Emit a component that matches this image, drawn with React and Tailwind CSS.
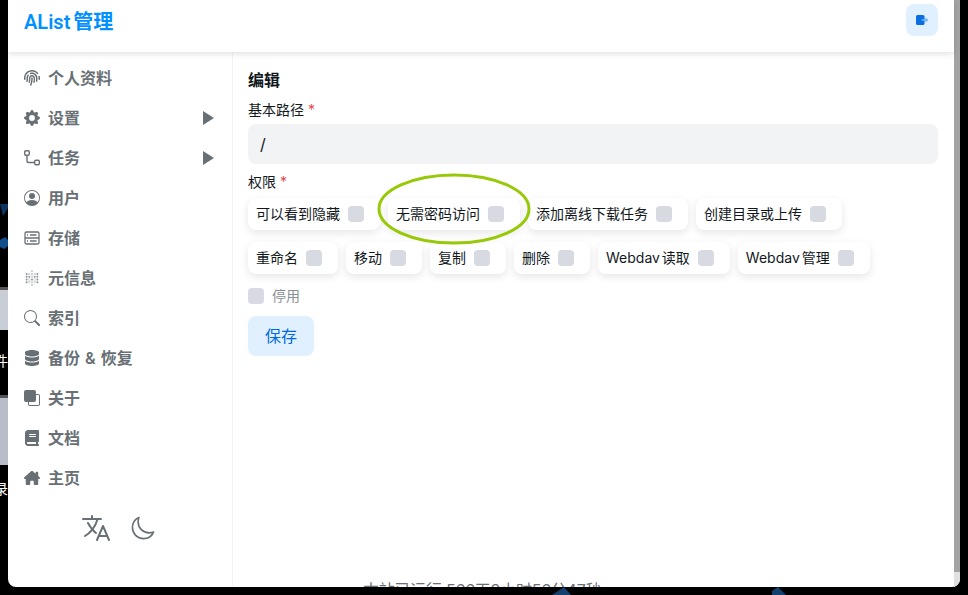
import { IoMoonOutline, IoLanguageOutline } from 'react-icons/io5'
import { BsGearFill, BsPersonCircle, BsFront, BsSearch } from 'react-icons/bs'
import { SiMetabase } from 'react-icons/si'
import { FaBook, FaHouseChimney, FaFingerprint, FaDatabase } from 'react-icons/fa6'

const FONT = '[font-family:Inter,"Noto_Sans_CJK_SC",sans-serif]'

// ── Side menu icons ──────────────────────────────────────────
function RouteIcon() {
  return (
    <svg width="16" height="16" viewBox="0 0 16 16" fill="none" stroke="currentColor" strokeWidth="1.4">
      <rect x="0.7" y="0.7" width="4.6" height="4.6" rx="1.2" />
      <rect x="10.7" y="10.2" width="4.6" height="4.6" rx="1.2" />
      <path d="M3 5.5v5.5q0 1.5 1.5 1.5h6" />
    </svg>
  )
}

function StorageIcon() {
  return (
    <svg width="16" height="16" viewBox="0 0 16 16" fill="none" stroke="currentColor" strokeWidth="1.3">
      <rect x="1" y="2" width="14" height="12" rx="1.5" />
      <path d="M1 8h14M6 5h6.5M6 11h6.5M3 5h1M3 11h1" />
    </svg>
  )
}

function LogoutIcon() {
  return (
    <svg width="14" height="14" viewBox="0 0 14 14">
      <rect x="1" y="2" width="8.5" height="10" rx="1.5" fill="#0b6ee0" />
      <path d="M6.5 6.2h4V4.4L13.4 7l-2.9 2.6V7.8h-4z" fill="#6cb0f5" />
    </svg>
  )
}

const MENU = [
  { label: '个人资料', icon: <FaFingerprint size={16} /> },
  { label: '设置', icon: <BsGearFill size={16} />, arrow: true },
  { label: '任务', icon: <RouteIcon />, arrow: true },
  { label: '用户', icon: <BsPersonCircle size={16} /> },
  { label: '存储', icon: <StorageIcon /> },
  { label: '元信息', icon: <SiMetabase size={16} className="opacity-70" /> },
  { label: '索引', icon: <BsSearch size={16} /> },
  { label: '备份 & 恢复', icon: <FaDatabase size={16} /> },
  { label: '关于', icon: <BsFront size={16} /> },
  { label: '文档', icon: <FaBook size={16} /> },
  { label: '主页', icon: <FaHouseChimney size={16} /> },
]

const ROW_ONE = ['可以看到隐藏', '无需密码访问', '添加离线下载任务', '创建目录或上传']
const ROW_TWO = ['重命名', '移动', '复制', '删除', 'Webdav 读取', 'Webdav 管理']

function Box() {
  return <span className="w-4 h-4 rounded bg-[#d7dbe1] shrink-0" />
}

function Perm({ label }) {
  return (
    <div className="flex items-center gap-2 h-8 pl-2 pr-4 rounded-lg bg-white shadow-[0_3px_8px_rgba(0,0,0,0.1)]">
      <span className="text-sm leading-5 text-[#11181c] [word-spacing:-2px]">{label}</span>
      <Box />
    </div>
  )
}

function Sidebar() {
  return (
    <aside className="w-[225px] shrink-0 border-r border-[#f1f3f5] pt-1.5">
      {MENU.map((item) => (
        <div key={item.label} className="h-10 flex items-center pl-4 pr-[18px] gap-2 text-[#687076]">
          <span className="w-4 flex justify-center shrink-0">{item.icon}</span>
          <span className="text-base font-semibold flex-1 [word-spacing:1px]">{item.label}</span>
          {item.arrow && (
            <svg width="11" height="14" viewBox="0 0 11 14" fill="currentColor">
              <path d="M0 0l11 7-11 7z" />
            </svg>
          )}
        </div>
      ))}
      <div className="flex items-center justify-center gap-[18px] h-[60px] pr-1 text-[#687076]">
        <IoLanguageOutline size={32} />
        <IoMoonOutline size={26} />
      </div>
    </aside>
  )
}

// bits of the desktop that show round the window
function Wallpaper() {
  return (
    <>
      <svg className="absolute inset-0" width="968" height="595" viewBox="0 0 968 595">
        <polygon points="0,204 8,204 8,208 3,216" fill="#0c3560" />
        <polygon points="0,240 5,237 8,240 8,246 4,249 0,247" fill="#12508c" />
        <rect x="0" y="287" width="8" height="43" fill="#c8cdd6" />
        <rect x="0" y="287" width="8" height="3" fill="#555555" />
        <rect x="0" y="395" width="8" height="70" fill="#b8bec9" />
        <rect x="0" y="395" width="8" height="3" fill="#555555" />
        <polygon points="552,595 564,587 571,595" fill="#14406e" />
        <polygon points="772,591 778,587 786,595 772,595" fill="#14406e" />
      </svg>
      <span className="absolute left-[-6px] top-[351px] text-sm text-white">件</span>
      <span className="absolute left-[-6px] top-[479px] text-sm text-white">录</span>
    </>
  )
}

export default function App() {
  return (
    <div className={`relative h-[595px] overflow-hidden bg-black px-2 pb-2 ${FONT}`}>
      <Wallpaper />
      <div className="relative h-[587px] flex bg-white rounded-b-lg overflow-hidden">
        <div className="flex-1 min-w-0 flex flex-col">
          <header className="relative h-[52px] shrink-0 flex items-start justify-between px-4 pt-1 shadow-[0_2px_6px_rgba(0,0,0,0.12)]">
            <h1 className='text-xl font-semibold leading-9 text-[#0091ff] [word-spacing:-2px] [font-family:Roboto,"Noto_Sans_CJK_SC",sans-serif]'>AList 管理</h1>
            <button className="w-8 h-8 rounded-lg bg-[#e1f0ff] flex items-center justify-center">
              <LogoutIcon />
            </button>
          </header>
          <div className="flex flex-1 min-h-0">
            <Sidebar />
            <main className="flex-1 min-w-0 relative pl-[15px] pr-4 pt-4">
              <h2 className="text-base font-semibold leading-6 text-[#11181c]">编辑</h2>
              <label className="block mt-2 text-sm leading-5 text-[#11181c]">
                基本路径 <span className="text-[#e5484d]">*</span>
              </label>
              <div className="mt-1 h-10 rounded-lg bg-[#f1f3f5] flex items-center pl-3 text-base text-[#11181c]">/</div>
              <label className="block mt-2 text-sm leading-5 text-[#11181c]">
                权限 <span className="text-[#e5484d]">*</span>
              </label>
              <div className="flex flex-col gap-3 mt-1.5">
                <div className="flex gap-2">
                  {ROW_ONE.map((p) => <Perm key={p} label={p} />)}
                </div>
                <div className="flex gap-2">
                  {ROW_TWO.map((p) => <Perm key={p} label={p} />)}
                </div>
              </div>
              <div className="flex items-center gap-2 mt-3.5 h-4">
                <Box />
                <span className="text-sm text-[#889096]">停用</span>
              </div>
              <button className="block mt-3 w-[66px] h-10 rounded-lg bg-[#e1f0ff] text-base text-[#006adc]">保存</button>
              <p className="absolute left-[130px] top-[526px] text-base tracking-[-0.25px] text-[#687076] whitespace-nowrap">本站已运行 566天3小时56分47秒</p>
              <svg className="absolute left-[141px] top-[117px] pointer-events-none" width="160" height="80" viewBox="0 0 160 80" fill="none">
                <ellipse cx="80" cy="40" rx="75" ry="34" stroke="#97c909" strokeWidth="3" />
              </svg>
            </main>
          </div>
        </div>
        <div className="w-1.5 shrink-0 flex flex-col bg-[#e0e0e0]">
          <div className="h-[572px] bg-[#a3a3a3]" />
        </div>
      </div>
    </div>
  )
}
